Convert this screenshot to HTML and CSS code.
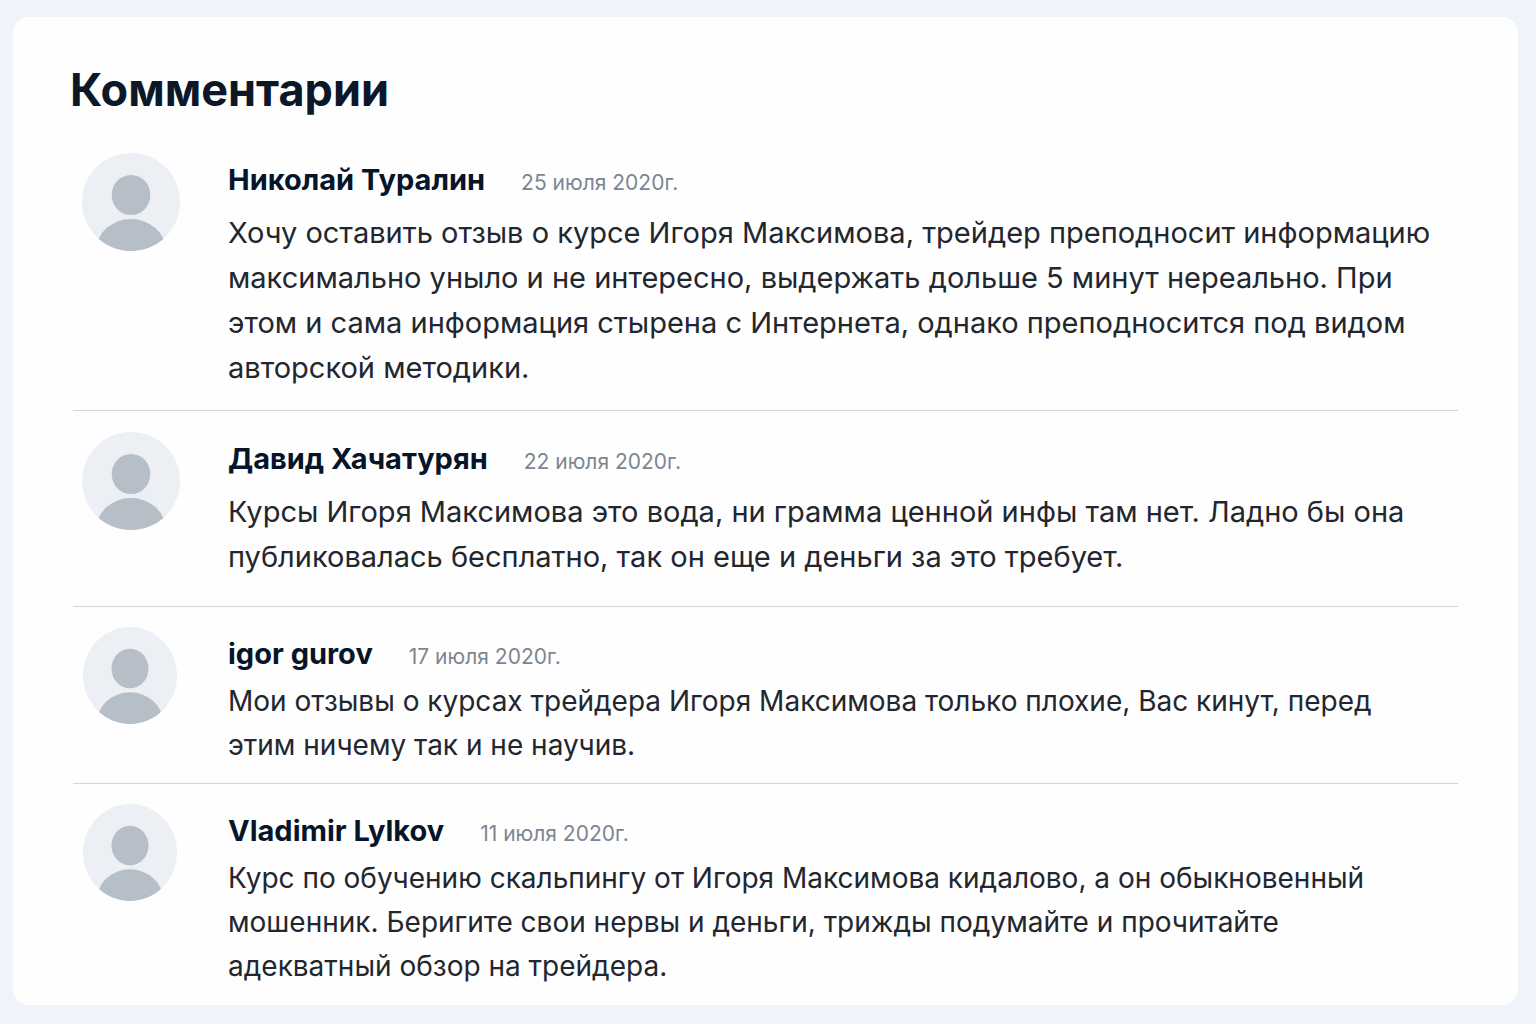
FILE: index.html
```
<!DOCTYPE html>
<html lang="ru">
<head>
  <meta charset="UTF-8" />
  <meta name="viewport" content="width=device-width, initial-scale=1" />
  <title>Комментарии</title>
  <link rel="stylesheet" href="styles.css">
</head>
<body>

<svg class="sprite" aria-hidden="true">
  <symbol id="avatar" viewBox="0 0 98 98" preserveAspectRatio="none">
    <clipPath id="avatar-clip"><circle cx="49" cy="49" r="49" /></clipPath>
    <g clip-path="url(#avatar-clip)">
      <rect class="avatar-bg" width="98" height="98" />
      <ellipse class="avatar-fg" cx="49" cy="42" rx="19.3" ry="20" />
      <ellipse class="avatar-fg" cx="49" cy="98" rx="35" ry="32" />
    </g>
  </symbol>
</svg>

<main class="card">
  <h1>Комментарии</h1>

  <article class="comment">
    <svg class="avatar" aria-hidden="true"><use href="#avatar" /></svg>
    <div class="content">
      <header>
        <h2>Николай Туралин</h2>
        <time datetime="2020-07-25">25 июля 2020г.</time>
      </header>
      <p>Хочу оставить отзыв о курсе Игоря Максимова, трейдер преподносит информацию<br>
      максимально уныло и не интересно, выдержать дольше 5 минут нереально. При<br>
      этом и сама информация стырена с Интернета, однако преподносится под видом<br>
      авторской методики.</p>
    </div>
  </article>

  <article class="comment roomy">
    <svg class="avatar" aria-hidden="true"><use href="#avatar" /></svg>
    <div class="content">
      <header>
        <h2>Давид Хачатурян</h2>
        <time datetime="2020-07-22">22 июля 2020г.</time>
      </header>
      <p>Курсы Игоря Максимова это вода, ни грамма ценной инфы там нет. Ладно бы она<br>
      публиковалась бесплатно, так он еще и деньги за это требует.</p>
    </div>
  </article>

  <article class="comment compact">
    <svg class="avatar" aria-hidden="true"><use href="#avatar" /></svg>
    <div class="content">
      <header>
        <h2>igor gurov</h2>
        <time datetime="2020-07-17">17 июля 2020г.</time>
      </header>
      <p>Мои отзывы о курсах трейдера Игоря Максимова только плохие, Вас кинут, перед<br>
      этим ничему так и не научив.</p>
    </div>
  </article>

  <article class="comment compact">
    <svg class="avatar" aria-hidden="true"><use href="#avatar" /></svg>
    <div class="content">
      <header>
        <h2>Vladimir Lylkov</h2>
        <time datetime="2020-07-11">11 июля 2020г.</time>
      </header>
      <p>Курс по обучению скальпингу от Игоря Максимова кидалово, а он обыкновенный<br>
      мошенник. Беригите свои нервы и деньги, трижды подумайте и прочитайте<br>
      адекватный обзор на трейдера.</p>
    </div>
  </article>
</main>

</body>
</html>
```
FILE: styles.css
```
* {
  box-sizing: border-box;
}
body {
  margin: 0;
  padding: 17px 18px 19px 13px;
  background-color: #eef4f9;
  font-family: Inter, "Liberation Sans", sans-serif;
  color: #22262f;
}
.sprite {
  position: absolute;
  width: 0;
  height: 0;
}
.card {
  padding: 45px 60px 1px;
  background-color: #fefefe;
  border-radius: 16px;
}
h1 {
  margin: 0 0 14px -3px;
  font-size: 45px;
  line-height: 56px;
  font-weight: 700;
  color: #0c1828;
}
.comment {
  display: flex;
  gap: 48px;
  padding: 21px 0 20px 9px;
}
.comment + .comment {
  border-top: 1px solid #d0d7dc;
}
.avatar {
  flex: none;
  width: 98px;
  height: 98px;
}
.avatar-bg { fill: #eceff3; }
.avatar-fg { fill: #b6bec8; }
.content {
  flex: 1;
  padding-top: 9px;
}
header {
  display: flex;
  align-items: baseline;
  gap: 36px;
  margin-bottom: 12px;
}
h2 {
  margin: 0;
  font-size: 29px;
  line-height: 36px;
  font-weight: 700;
  color: #07152a;
}
time {
  font-size: 21px;
  color: #7c8691;
}
p {
  margin: 0;
  font-size: 29px;
  line-height: 45px;
}
.comment.roomy {
  padding-bottom: 27px;
}
.comment.compact {
  padding-top: 20px;
  padding-bottom: 16px;
}
.compact .avatar {
  width: 94px;
  height: 97px;
  margin: 0 3px 0 1px;
}
.compact header {
  margin-bottom: 7px;
}
.compact p {
  font-size: 28px;
  line-height: 44px;
}
```
